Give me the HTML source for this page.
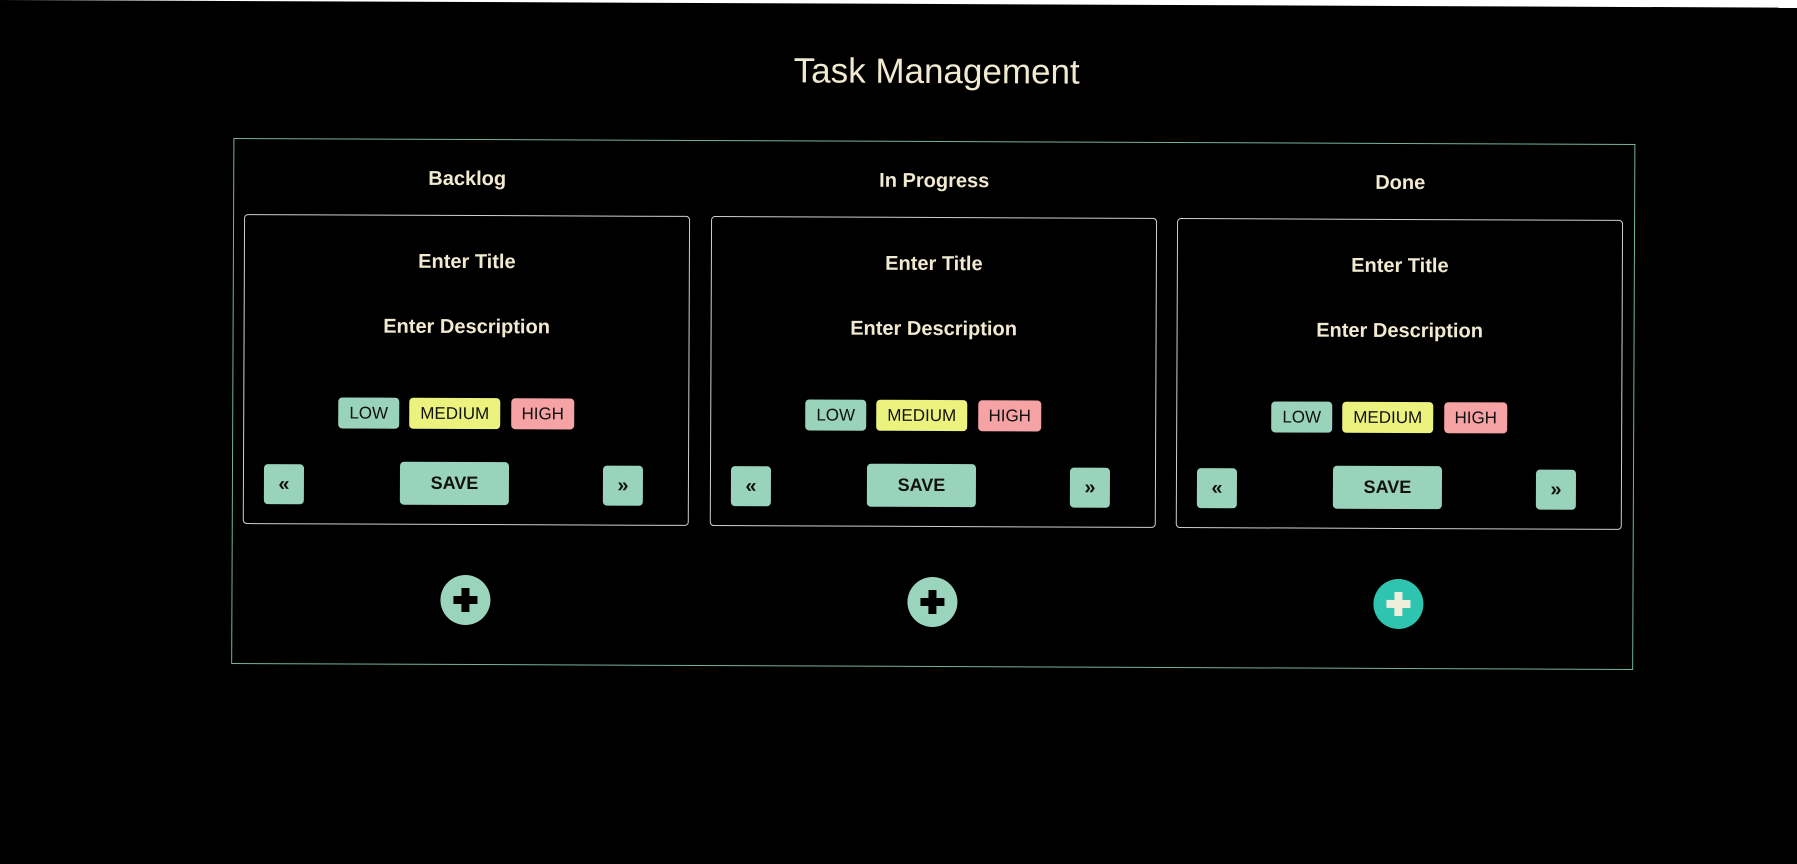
<!DOCTYPE html>
<html><head><meta charset="utf-8"><style>
html,body{margin:0;padding:0;background:#000;width:1797px;height:864px;overflow:hidden}
#clip{position:absolute;left:0;top:0;width:1797px;height:864px;overflow:hidden;background:#fff}
#pg{position:absolute;left:-20px;top:0;width:1900px;height:1200px;background:#000;transform:rotate(0.245deg);transform-origin:20px 0;font-family:"Liberation Sans",sans-serif;color:#f2ead0}
#in{position:absolute;left:20px;top:0;width:1860px;height:880px}
.a{position:absolute}
h1{position:absolute;left:0;width:1874px;top:48px;margin:0;text-align:center;font-size:35px;font-weight:normal;color:#f2ead0}
#board{left:234px;top:137px;width:1400px;height:524px;border:1px solid #73b39c}
.col{position:absolute;top:0;width:446px;height:524px}
.hd{position:absolute;top:28px;left:0;width:100%;text-align:center;font-weight:bold;font-size:20px}
.card{position:absolute;top:75px;left:0;width:444px;height:308px;border:1px solid #cfcfcf;border-radius:4px}
.t{position:absolute;left:0;width:100%;text-align:center;font-size:20px;font-weight:bold}
.p{position:absolute;top:182px;height:31px;border-radius:4px;color:#111;font-size:17px;line-height:31px;text-align:center}
.b{position:absolute;background:#99d3bc;border-radius:4px;color:#111;font-weight:bold;text-align:center}
.plus{position:absolute;top:435px;left:198px;width:50px;height:50px;border-radius:50%;background:#9bd4bd}
.plus:before{content:"";position:absolute;left:13px;top:21px;width:24px;height:8px;background:#000}
.plus:after{content:"";position:absolute;left:21px;top:13px;width:8px;height:24px;background:#000}
.plus.g{background:#2ec4b0}
.plus.g:before,.plus.g:after{background:#efeedd}
</style></head><body><div id="clip"><div id="pg"><div id="in">
<h1>Task Management</h1>
<div id="board" class="a">
 <div class="col" style="left:10px">
  <div class="hd">Backlog</div>
  <div class="card">
   <div class="t" style="top:35px">Enter Title</div>
   <div class="t" style="top:100px">Enter Description</div>
   <div class="p" style="left:94px;width:61px;background:#99d3bc">LOW</div>
   <div class="p" style="left:165px;width:91px;background:#ebf27e">MEDIUM</div>
   <div class="p" style="left:267px;width:63px;background:#f5a3a5">HIGH</div>
   <div class="b" style="left:20px;top:249px;width:40px;height:40px;line-height:40px;font-size:20px">«</div>
   <div class="b" style="left:156px;top:246px;width:109px;height:43px;line-height:43px;font-size:18px">SAVE</div>
   <div class="b" style="left:359px;top:249px;width:40px;height:40px;line-height:40px;font-size:20px">»</div>
  </div>
  <div class="plus"></div>
 </div>
 <div class="col" style="left:477px">
  <div class="hd">In Progress</div>
  <div class="card">
   <div class="t" style="top:35px">Enter Title</div>
   <div class="t" style="top:100px">Enter Description</div>
   <div class="p" style="left:94px;width:61px;background:#99d3bc">LOW</div>
   <div class="p" style="left:165px;width:91px;background:#ebf27e">MEDIUM</div>
   <div class="p" style="left:267px;width:63px;background:#f5a3a5">HIGH</div>
   <div class="b" style="left:20px;top:249px;width:40px;height:40px;line-height:40px;font-size:20px">«</div>
   <div class="b" style="left:156px;top:246px;width:109px;height:43px;line-height:43px;font-size:18px">SAVE</div>
   <div class="b" style="left:359px;top:249px;width:40px;height:40px;line-height:40px;font-size:20px">»</div>
  </div>
  <div class="plus"></div>
 </div>
 <div class="col" style="left:943px">
  <div class="hd">Done</div>
  <div class="card">
   <div class="t" style="top:35px">Enter Title</div>
   <div class="t" style="top:100px">Enter Description</div>
   <div class="p" style="left:94px;width:61px;background:#99d3bc">LOW</div>
   <div class="p" style="left:165px;width:91px;background:#ebf27e">MEDIUM</div>
   <div class="p" style="left:267px;width:63px;background:#f5a3a5">HIGH</div>
   <div class="b" style="left:20px;top:249px;width:40px;height:40px;line-height:40px;font-size:20px">«</div>
   <div class="b" style="left:156px;top:246px;width:109px;height:43px;line-height:43px;font-size:18px">SAVE</div>
   <div class="b" style="left:359px;top:249px;width:40px;height:40px;line-height:40px;font-size:20px">»</div>
  </div>
  <div class="plus g"></div>
 </div>
</div>
</div></div></div></body></html>
